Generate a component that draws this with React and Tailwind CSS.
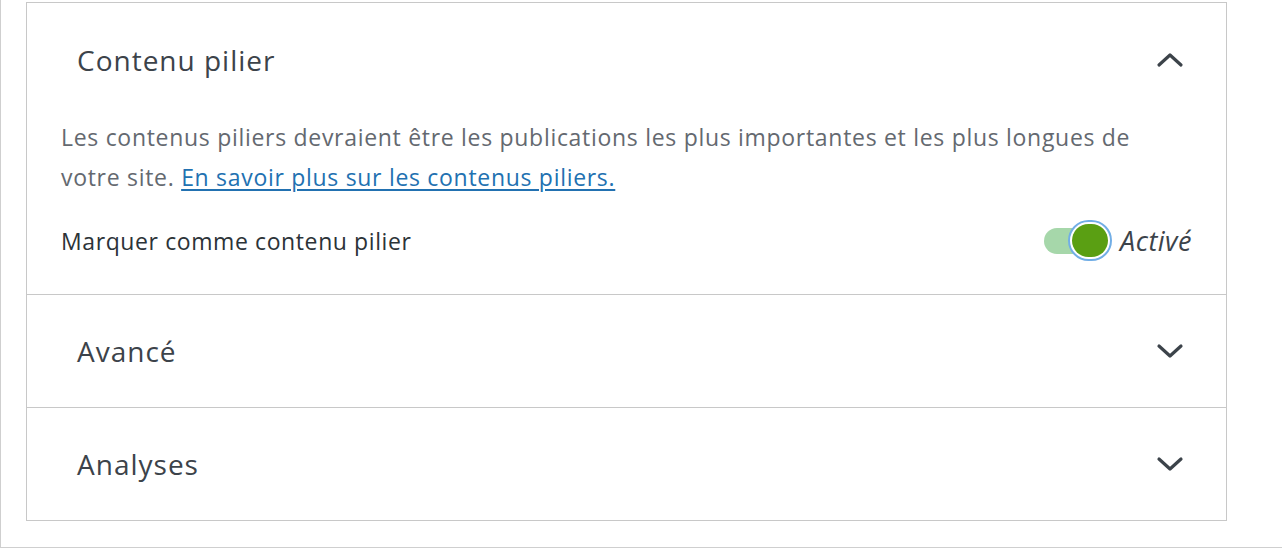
import { useState } from "react";

function Chevron({ up = false }) {
  return (
    <svg width="28" height="16" viewBox="0 0 28 16" className="shrink-0">
      <path
        d={up ? "M3 13 L14 3 L25 13" : "M3 3 L14 13 L25 3"}
        fill="none"
        stroke="#3c434a"
        strokeWidth="3.2"
        strokeLinecap="round"
        strokeLinejoin="round"
      />
    </svg>
  );
}

function SectionHeader({ title, open, h = "h-[114px]" }) {
  return (
    <div className={`flex items-center justify-between pl-[50px] pr-[42px] ${h}`}>
      <span className="text-[28px] tracking-[1px] text-[#3c434a]">{title}</span>
      <Chevron up={open} />
    </div>
  );
}

function Toggle({ on }) {
  return (
    <div className="flex items-center gap-[8px]">
      <div className="relative w-[68px] h-[42px] flex items-center">
        <div className="w-[44px] h-[26px] rounded-full bg-[#a6d7aa]" />
        <div className="absolute right-0 top-0 w-[44px] h-[41px] rounded-full border-[2px] border-[#72aee6] bg-white p-[2px]">
          <div className="w-full h-full rounded-full bg-[#5a9f13]" />
        </div>
      </div>
      <span className="italic text-[27px] tracking-[0.5px] text-[#3c434a]">{on ? "Activé" : "Désactivé"}</span>
    </div>
  );
}

export default function App() {
  const [on] = useState(true);
  return (
    <div
      className="w-[1282px] h-[550px] bg-white overflow-hidden"
      style={{ fontFamily: '"Open Sans", "Noto Sans", sans-serif' }}
    >
      <div className="h-[548px] border-l border-b border-[#cfcfcf] pl-[25px] pt-[2px]">
        <div className="w-[1201px] border border-[#c8c8c8] bg-white">
          <div className="border-b border-[#c8c8c8] pb-[32px]">
            <SectionHeader title="Contenu pilier" open />
            <div className="px-[34px]">
              <p className="max-w-[1110px] text-[23px] tracking-[0.7px] leading-[40px] text-[#646970]">
                Les contenus piliers devraient être les publications les plus importantes et les plus longues de
                votre site.{" "}
                <a href="#" className="text-[#2271b1] underline underline-offset-[3px]">
                  En savoir plus sur les contenus piliers.
                </a>
              </p>
              <div className="mt-[23px] h-[42px] flex items-center justify-between">
                <span className="text-[23px] tracking-[0.6px] text-[#2c3338]">Marquer comme contenu pilier</span>
                <Toggle on={on} />
              </div>
            </div>
          </div>
          <div className="border-b border-[#c8c8c8]">
            <SectionHeader title="Avancé" h="h-[112px]" />
          </div>
          <SectionHeader title="Analyses" h="h-[112px]" />
        </div>
      </div>
    </div>
  );
}
